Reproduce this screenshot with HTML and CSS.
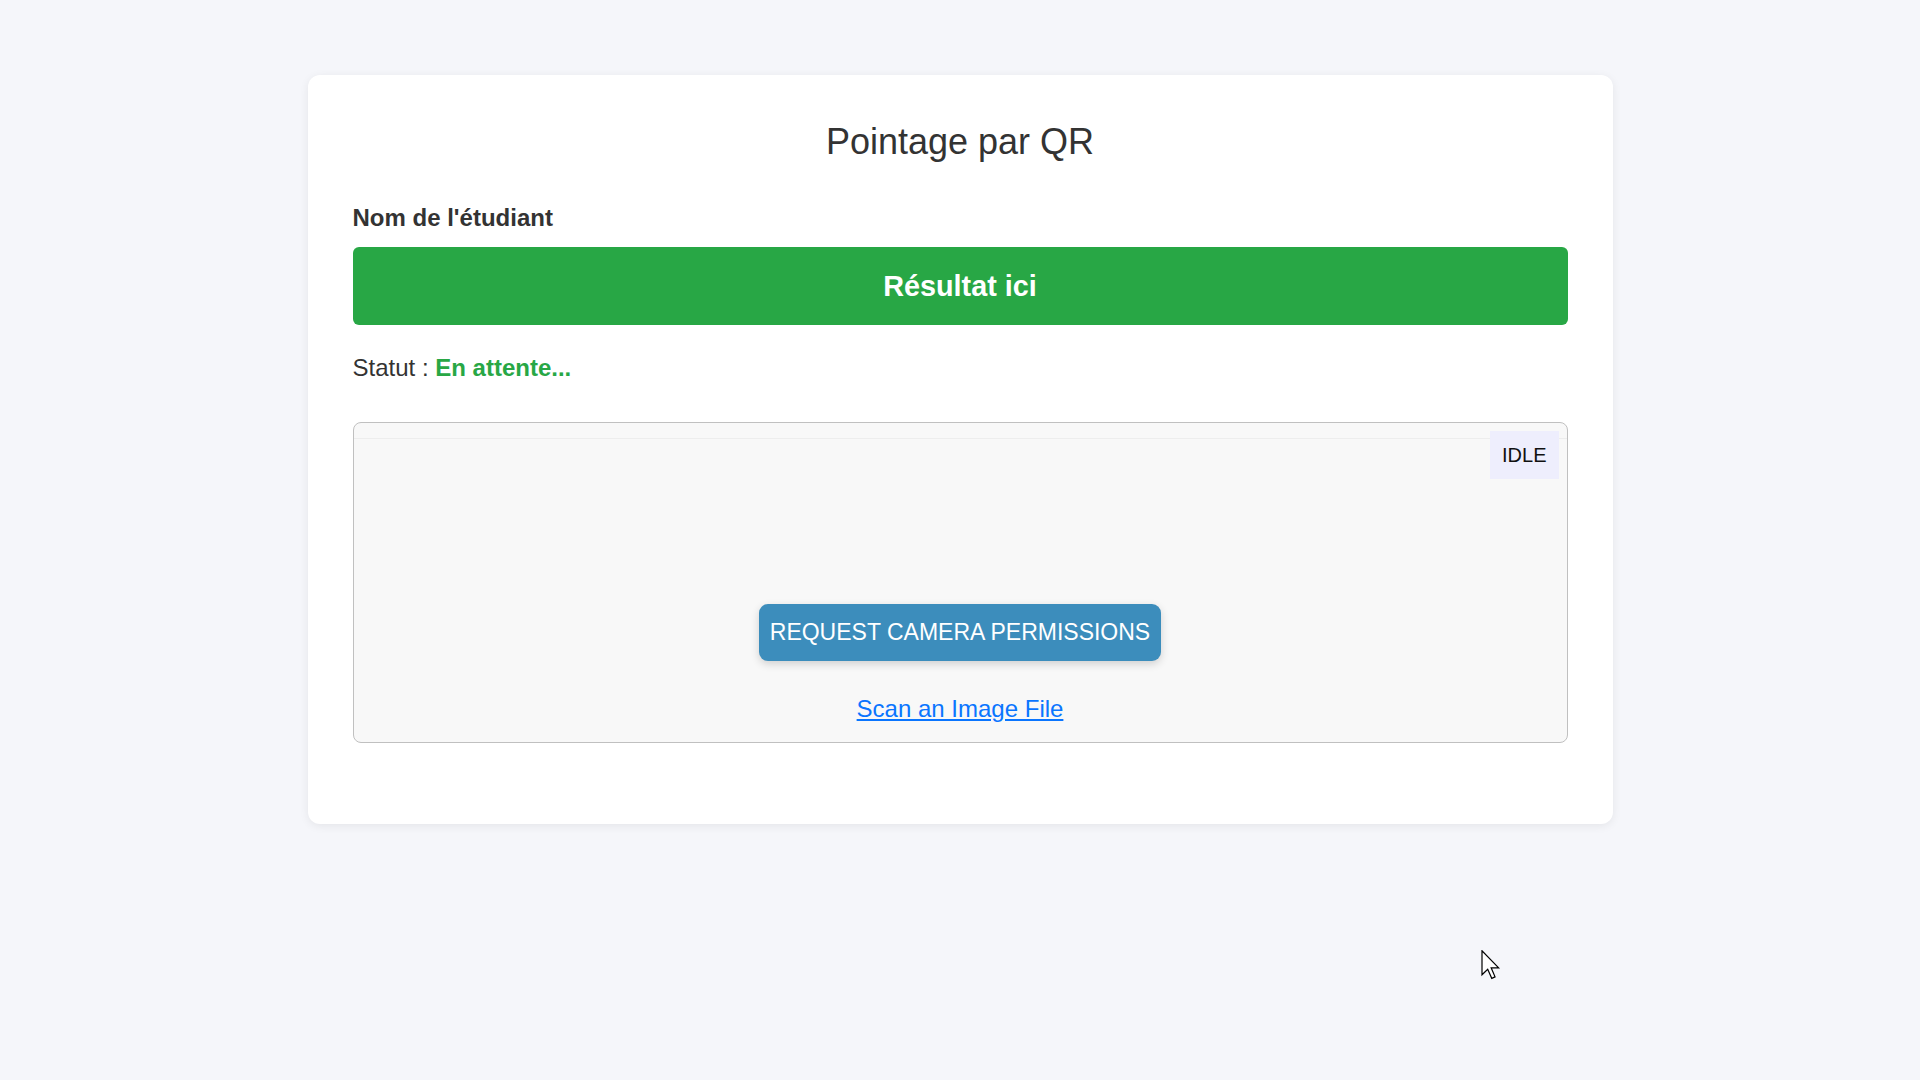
FILE: index.html
```html
<!DOCTYPE html>
<html lang="fr">
<head>
<meta charset="utf-8">
<title>Pointage par QR</title>
<link rel="stylesheet" href="styles.css">
</head>
<body>
<main class="card">
  <h1 class="title">Pointage par QR</h1>
  <label class="field-label">Nom de l'étudiant</label>
  <div class="result">Résultat ici</div>
  <p class="status">Statut : <span class="status-value">En attente...</span></p>
  <div class="scanner">
    <div class="scanner-head"></div>
    <span class="scanner-badge">IDLE</span>
    <div class="scan-region"></div>
    <div class="dashboard">
      <button class="perm-btn" type="button">REQUEST CAMERA PERMISSIONS</button>
      <div class="file-row"><a class="file-link" href="#">Scan an Image File</a></div>
    </div>
  </div>
</main>
<svg class="cursor" width="20" height="30" viewBox="0 0 13 20">
  <path d="M0.5 0.5 L0.5 16.5 L4.3 12.8 L7 18.9 L9.2 17.9 L6.6 11.9 L11.6 11.9 Z" fill="#ffffff" stroke="#000000" stroke-width="0.8" stroke-linejoin="miter"/>
</svg>
</body>
</html>
```
FILE: styles.css
```css
html, body {
  margin: 0;
  padding: 0;
}
body {
  background: #f5f6fa;
  font-family: "Liberation Sans", Arial, sans-serif;
  color: #333333;
  min-height: 1080px;
  position: relative;
  overflow: hidden;
}
.card {
  display: block;
  width: 1305px;
  box-sizing: border-box;
  margin: 75px auto 0;
  padding: 46px 45px 45px;
  background: #ffffff;
  border-radius: 12px;
  box-shadow: 0 2px 10px rgba(0, 0, 0, 0.07);
}
.title {
  margin: 0 0 41px;
  font-size: 36px;
  font-weight: normal;
  text-align: center;
  color: #333333;
  line-height: normal;
}
.field-label {
  display: block;
  font-size: 24px;
  font-weight: bold;
  color: #333333;
  margin: 0 0 15px;
}
.result {
  background: #28a745;
  color: #ffffff;
  font-weight: bold;
  font-size: 28.8px;
  line-height: 34px;
  padding: 22px 0;
  text-align: center;
  border-radius: 6px;
}
.status {
  margin: 29px 0 40px;
  font-size: 24px;
  color: #333333;
}
.status-value {
  color: #28a745;
  font-weight: bold;
}
.scanner {
  position: relative;
  border: 1px solid #c0c0c0;
  border-radius: 8px;
  background: #f8f8f8;
  margin-bottom: 36px;
}
.scanner-head {
  height: 15px;
  border-bottom: 1px solid #ededed;
}
.scanner-badge {
  position: absolute;
  top: 8px;
  right: 8px;
  background: #eeeefd;
  color: #111111;
  font-size: 20px;
  line-height: 24px;
  padding: 12px 12px;
}
.scan-region {
  height: 165px;
}
.dashboard {
  text-align: center;
  padding-bottom: 19px;
}
.perm-btn {
  font-family: "Liberation Sans", Arial, sans-serif;
  font-size: 23px;
  line-height: 27px;
  padding: 15px 11px;
  color: #ffffff;
  background: #3c8dbc;
  border: none;
  border-radius: 9px;
  box-shadow: 0 3px 8px rgba(0, 0, 0, 0.16);
  cursor: pointer;
}
.file-row {
  margin-top: 34px;
  font-size: 24px;
}
.file-link {
  color: #0a75ff;
  text-decoration: underline;
}
.cursor {
  position: absolute;
  left: 1481px;
  top: 950px;
}
```
